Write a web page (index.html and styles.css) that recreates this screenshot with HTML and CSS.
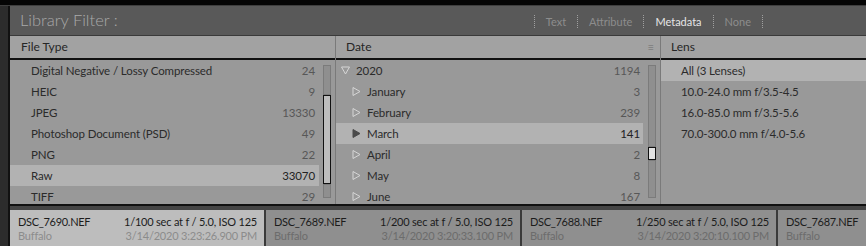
FILE: index.html
```html
<!DOCTYPE html>
<html lang="en">
<head>
  <meta charset="UTF-8">
  <title>Library Filter</title>
  <link rel="stylesheet" href="styles.css">
</head>
<body>
  <div class="topbar"></div>
  <div class="app">
    <div class="side"></div>
    <div class="main">

      <div class="filter-bar">
        <span class="filter-title">Library Filter :</span>
        <div class="filter-tabs">
          <span class="sep"></span>
          <span class="tab">Text</span>
          <span class="sep"></span>
          <span class="tab">Attribute</span>
          <span class="sep"></span>
          <span class="tab active">Metadata</span>
          <span class="sep"></span>
          <span class="tab">None</span>
          <span class="sep"></span>
        </div>
      </div>

      <div class="browser">
        <section class="col col-type">
          <div class="col-head">File Type</div>
          <div class="col-body">
            <ul class="list">
              <li class="row"><span class="label">Digital Negative / Lossy Compressed</span><span class="count">24</span></li>
              <li class="row"><span class="label">HEIC</span><span class="count">9</span></li>
              <li class="row"><span class="label">JPEG</span><span class="count">13330</span></li>
              <li class="row"><span class="label">Photoshop Document (PSD)</span><span class="count">49</span></li>
              <li class="row"><span class="label">PNG</span><span class="count">22</span></li>
              <li class="row selected"><span class="label">Raw</span><span class="count">33070</span></li>
              <li class="row"><span class="label">TIFF</span><span class="count">29</span></li>
            </ul>
            <div class="scroll">
              <div class="track"></div>
              <div class="thumb big"></div>
              <div class="track"></div>
            </div>
          </div>
        </section>

        <section class="col col-date">
          <div class="col-head">Date <span class="sort">&#8801;</span></div>
          <div class="col-body">
            <ul class="list">
              <li class="row year">
                <svg class="tri" width="9" height="9" viewBox="0 0 9 9"><polygon points="0.5,1 8.5,1 4.5,8" /></svg>
                <span class="label">2020</span><span class="count">1194</span>
              </li>
              <li class="row month">
                <svg class="tri" width="9" height="9" viewBox="0 0 9 9"><polygon points="1,0.5 8,4.5 1,8.5" /></svg>
                <span class="label">January</span><span class="count">3</span>
              </li>
              <li class="row month">
                <svg class="tri" width="9" height="9" viewBox="0 0 9 9"><polygon points="1,0.5 8,4.5 1,8.5" /></svg>
                <span class="label">February</span><span class="count">239</span>
              </li>
              <li class="row month selected">
                <svg class="tri solid" width="9" height="9" viewBox="0 0 9 9"><polygon points="1,0.5 8,4.5 1,8.5" /></svg>
                <span class="label">March</span><span class="count">141</span>
              </li>
              <li class="row month">
                <svg class="tri" width="9" height="9" viewBox="0 0 9 9"><polygon points="1,0.5 8,4.5 1,8.5" /></svg>
                <span class="label">April</span><span class="count">2</span>
              </li>
              <li class="row month">
                <svg class="tri" width="9" height="9" viewBox="0 0 9 9"><polygon points="1,0.5 8,4.5 1,8.5" /></svg>
                <span class="label">May</span><span class="count">8</span>
              </li>
              <li class="row month">
                <svg class="tri" width="9" height="9" viewBox="0 0 9 9"><polygon points="1,0.5 8,4.5 1,8.5" /></svg>
                <span class="label">June</span><span class="count">167</span>
              </li>
            </ul>
            <div class="scroll">
              <div class="track"></div>
              <div class="thumb small"></div>
              <div class="track"></div>
            </div>
          </div>
        </section>

        <section class="col col-lens">
          <div class="col-head">Lens</div>
          <div class="col-body">
            <ul class="list">
              <li class="row selected"><span class="label">All (3 Lenses)</span></li>
              <li class="row"><span class="label">10.0-24.0 mm f/3.5-4.5</span></li>
              <li class="row"><span class="label">16.0-85.0 mm f/3.5-5.6</span></li>
              <li class="row"><span class="label">70.0-300.0 mm f/4.0-5.6</span></li>
            </ul>
          </div>
        </section>
      </div>

      <div class="filmstrip">
        <div class="cell selected">
          <div class="line"><span class="name">DSC_7690.NEF</span><span class="exp">1/100 sec at f / 5.0, ISO 125</span></div>
          <div class="line sub"><span>Buffalo</span><span>3/14/2020 3:23:26.900 PM</span></div>
        </div>
        <div class="cell">
          <div class="line"><span class="name">DSC_7689.NEF</span><span class="exp">1/200 sec at f / 5.0, ISO 125</span></div>
          <div class="line sub"><span>Buffalo</span><span>3/14/2020 3:20:33.100 PM</span></div>
        </div>
        <div class="cell">
          <div class="line"><span class="name">DSC_7688.NEF</span><span class="exp">1/250 sec at f / 5.0, ISO 125</span></div>
          <div class="line sub"><span>Buffalo</span><span>3/14/2020 3:20:10.100 PM</span></div>
        </div>
        <div class="cell last">
          <div class="line"><span class="name">DSC_7687.NEF</span></div>
          <div class="line sub"><span>Buffalo</span></div>
        </div>
      </div>

    </div>
  </div>
</body>
</html>
```

FILE: styles.css
```css
body {
  margin: 0;
  background: #000;
  font-family: Lato, 'Open Sans', sans-serif;
  font-size: 11.5px;
  color: #2b2b2b;
  overflow: hidden;
}

.topbar {
  height: 5px;
  background: #050505;
  border-bottom: 1px solid #3e3e3e;
}

.app {
  display: flex;
  height: 240px;
}

.side {
  width: 8px;
  background: #2c2c2c;
  border-right: 2px solid #111;
}

.main {
  flex: 1;
  display: flex;
  flex-direction: column;
  min-width: 0;
}

/* filter bar */

.filter-bar {
  height: 29px;
  background: #595959;
  border-bottom: 1px solid #3a3a3a;
  display: flex;
  align-items: center;
  justify-content: space-between;
}

.filter-title {
  font-size: 16.5px;
  font-weight: 300;
  color: #a9a9a9;
  margin-left: 10px;
  margin-top: -2px;
}

.filter-tabs {
  display: flex;
  align-items: center;
  margin-right: 103px;
  margin-top: 2px;
}

.tab {
  color: #8d8d8d;
  padding: 0 11px;
  font-size: 11px;
}

.tab.active {
  color: #e6e6e6;
}

.sep {
  width: 0;
  height: 13px;
  border-left: 1px dotted #a0a0a0;
}

/* browser columns */

.browser {
  display: flex;
  height: 168px;
}

.col {
  display: flex;
  flex-direction: column;
  background: #999;
}

.col-type {
  width: 325px;
  border-right: 1px solid #7a7a7a;
}

.col-date {
  width: 324px;
  border-right: 1px solid #7a7a7a;
}

.col-lens {
  flex: 1;
}

.col-head {
  height: 22px;
  line-height: 22px;
  background: #a2a2a2;
  border-bottom: 2px solid #111;
  padding-left: 11px;
  color: #262626;
  font-size: 12px;
  position: relative;
}

.col-date .col-head,
.col-lens .col-head {
  padding-left: 10px;
}

.sort {
  position: absolute;
  right: 6px;
  top: 0;
  color: #7c7c7c;
  font-size: 11px;
}

.col-body {
  flex: 1;
  display: flex;
  overflow: hidden;
}

.list {
  list-style: none;
  margin: 0;
  padding: 0;
  flex: 1;
}

.row {
  height: 21px;
  display: flex;
  align-items: center;
  padding: 0 4px 0 21px;
  letter-spacing: -0.1px;
}

.row.selected {
  background: #b2b2b2;
}

.label {
  flex: 1;
  white-space: nowrap;
}

.count {
  color: #575757;
}

.row.selected .count {
  color: #222;
}

.col-date .row {
  padding-left: 5px;
  padding-right: 3px;
}

.col-date .row.month {
  padding-left: 16px;
}

.tri {
  margin-right: 6px;
  fill: none;
  stroke: #d6d6d6;
  stroke-width: 1;
}

.tri.solid {
  fill: #4a4a4a;
  stroke: #4a4a4a;
}

.col-lens .row {
  padding-left: 20px;
}

/* scrollbars */

.scroll {
  width: 8px;
  margin: 5px 4px 6px 4px;
  display: flex;
  flex-direction: column;
}

.col-date .scroll {
  margin-left: 5px;
}

.track {
  flex: 1;
  background: #8f8f8f;
  border: 1px solid #7b7b7b;
  box-sizing: border-box;
}

.thumb {
  background: #bdbdbd;
  border: 1.5px solid #111;
  box-sizing: border-box;
}

.thumb.big {
  height: 89px;
  flex: none;
}

.col-type .scroll .track:first-child {
  flex: none;
  height: 30px;
}

.thumb.small {
  height: 13px;
  background: #e2e2e2;
}

.col-date .scroll .track:first-child {
  flex: none;
  height: 82px;
}

/* filmstrip */

.filmstrip {
  height: 36px;
  border-top: 2px solid #111;
  padding-top: 4px;
  background: #454545;
  display: flex;
}

.cell {
  width: 256px;
  flex: none;
  box-sizing: border-box;
  background: #8f8f8f;
  border-right: 2px solid #3a3a3a;
  padding: 5px 7px 0 8px;
  font-size: 11px;
  letter-spacing: -0.2px;
  white-space: nowrap;
  overflow: hidden;
}

.cell.selected {
  background: #bdbdbd;
}

.cell.last {
  flex: 1;
  border-right: none;
}

.line {
  display: flex;
  justify-content: space-between;
  height: 14px;
  line-height: 14px;
  color: #1c1c1c;
}

.name {
  font-size: 11px;
  letter-spacing: -0.3px;
}

.line.sub {
  color: #6c6c6c;
}

.cell.selected .line.sub {
  color: #8c8c8c;
}
```
